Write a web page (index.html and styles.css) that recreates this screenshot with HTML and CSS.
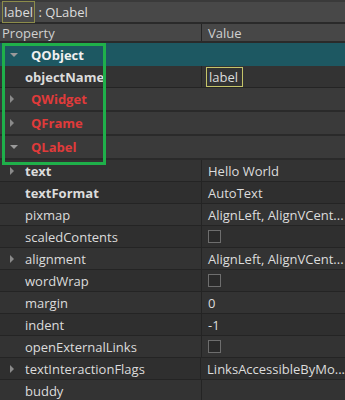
FILE: index.html
```html
<!DOCTYPE html>
<html lang="en">
<head>
    <meta charset="UTF-8">
    <title>Property Editor</title>
    <link rel="stylesheet" href="styles.css">
</head>
<body>
    <!-- Objeto selecionado -->
    <div class="objbar"><span class="objname">label</span> : QLabel</div>

    <!-- Cabeçalho -->
    <div class="row head">
        <div class="name">Property</div>
        <div class="value">Value</div>
    </div>

    <div class="tree">
        <div class="row cat open"><span class="arrow down"></span><span class="cname">QObject</span></div>
        <div class="row prop"><div class="name bold">objectName</div><div class="value"><span class="edit">label</span></div></div>
        <div class="row group"><span class="arrow right"></span><span class="cname">QWidget</span></div>
        <div class="row group"><span class="arrow right"></span><span class="cname">QFrame</span></div>
        <div class="row group"><span class="arrow down"></span><span class="cname">QLabel</span></div>

        <div class="row prop"><div class="name bold"><span class="arrow right"></span>text</div><div class="value">Hello World</div></div>
        <div class="row prop"><div class="name bold">textFormat</div><div class="value">AutoText</div></div>
        <div class="row prop"><div class="name">pixmap</div><div class="value">AlignLeft, AlignVCent...</div></div>
        <div class="row prop"><div class="name">scaledContents</div><div class="value"><span class="check"></span></div></div>
        <div class="row prop"><div class="name"><span class="arrow right"></span>alignment</div><div class="value">AlignLeft, AlignVCent...</div></div>
        <div class="row prop"><div class="name">wordWrap</div><div class="value"><span class="check"></span></div></div>
        <div class="row prop"><div class="name">margin</div><div class="value">0</div></div>
        <div class="row prop"><div class="name">indent</div><div class="value">-1</div></div>
        <div class="row prop"><div class="name">openExternalLinks</div><div class="value"><span class="check"></span></div></div>
        <div class="row prop"><div class="name"><span class="arrow right"></span>textInteractionFlags</div><div class="value">LinksAccessibleByMo...</div></div>
        <div class="row prop"><div class="name">buddy</div><div class="value"></div></div>

        <!-- Destaque verde -->
        <div class="highlight"></div>
    </div>
</body>
</html>
```

FILE: styles.css
```css
* {
    margin: 0;
    padding: 0;
    box-sizing: border-box;
}
body {
    width: 345px;
    height: 400px;
    overflow: hidden;
    background: #2c2c2c;
    color: #dcdcdc;
    font-family: 'Open Sans', 'Noto Sans', sans-serif;
    font-size: 13px;
    padding-top: 2px;
    background-color: #3a3a3a;
}
.objbar {
    height: 20px;
    background: #484848;
    display: flex;
    align-items: center;
    padding-left: 2px;
    white-space: pre;
    border-bottom: 2px solid #2a2a2a;
    height: 22px;
}
.objname {
    border: 1px solid #8c8c4a;
    padding: 0 1px;
    height: 22px;
    line-height: 20px;
}
.row {
    display: flex;
    align-items: center;
    position: relative;
}
.head {
    height: 19px;
    background: #474747;
    border-bottom: 2px solid #2a2a2a;
    color: #d0d0d0;
}
.head .name {
    padding-left: 2px;
}
.name {
    width: 202px;
    height: 100%;
    display: flex;
    align-items: center;
    padding-left: 25px;
    border-right: 1px solid #242424;
    position: relative;
}
.value {
    flex: 1;
    padding-left: 6px;
    display: flex;
    align-items: center;
    height: 100%;
}
.bold {
    font-weight: bold;
}
.tree {
    position: relative;
    background: #2e2e2e;
}
.cat {
    height: 23px;
    background: #1d5862;
    color: #f0f0f0;
    font-weight: bold;
}
.group {
    height: 24px;
    background: #3a3a3a;
    border-bottom: 2px solid #2a2a2a;
    color: #e03a3a;
    font-weight: bold;
}
.cname {
    padding-left: 31px;
}
.prop {
    height: 22px;
    background: #2f2f2f;
    border-bottom: 1px solid #242424;
}
.prop:nth-child(even) {
    background: #333333;
}
.arrow {
    position: absolute;
    left: 10px;
    top: 50%;
    width: 0;
    height: 0;
}
.arrow.down {
    margin-top: -2px;
    border-left: 4px solid transparent;
    border-right: 4px solid transparent;
    border-top: 4px solid #9a9a9a;
}
.arrow.right {
    margin-top: -4px;
    border-top: 4px solid transparent;
    border-bottom: 4px solid transparent;
    border-left: 4px solid #8a8a8a;
}
.edit {
    border: 1px solid #c4c46a;
    padding: 0 4px 0 2px;
    height: 20px;
    line-height: 18px;
    margin-left: -2px;
    font-weight: normal;
}
.check {
    width: 13px;
    height: 13px;
    border: 1px solid #6e6e6e;
    background: #2a2a2a;
}
.highlight {
    position: absolute;
    left: 2px;
    top: 0;
    width: 104px;
    height: 122px;
    border: 3px solid #1fb04a;
}
```
